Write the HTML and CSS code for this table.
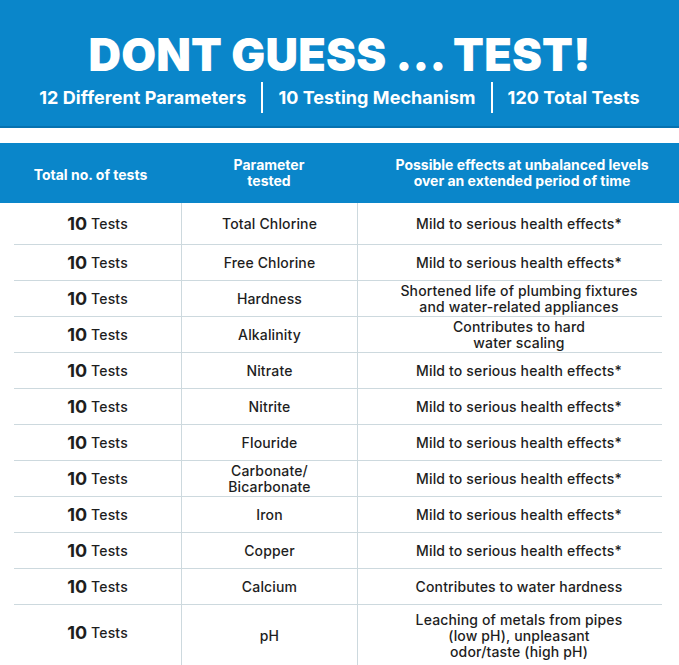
FILE: index.html
```html
<!DOCTYPE html>
<html>
<head>
<meta charset="utf-8">
<link rel="stylesheet" href="styles.css">
</head>
<body>
<div class="page">
  <header class="banner">
    <h1 class="title">DONT GUESS ... TEST!</h1>
    <div class="stats">
      <span class="stat">12 Different Parameters</span>
      <span class="sep"></span>
      <span class="stat">10 Testing Mechanism</span>
      <span class="sep"></span>
      <span class="stat">120 Total Tests</span>
    </div>
  </header>
  <div class="table">
    <div class="thead">
      <div class="th">Total no. of tests</div>
      <div class="th">Parameter<br>tested</div>
      <div class="th th3">Possible effects at unbalanced levels<br>over an extended period of time</div>
    </div>
    <div class="row r1"><div class="c1"><b>10</b> Tests</div><div class="c2">Total Chlorine</div><div class="c3">Mild to serious health effects*</div></div>
    <div class="row"><div class="c1"><b>10</b> Tests</div><div class="c2">Free Chlorine</div><div class="c3">Mild to serious health effects*</div></div>
    <div class="row"><div class="c1"><b>10</b> Tests</div><div class="c2">Hardness</div><div class="c3">Shortened life of plumbing fixtures<br>and water-related appliances</div></div>
    <div class="row"><div class="c1"><b>10</b> Tests</div><div class="c2">Alkalinity</div><div class="c3">Contributes to hard<br>water scaling</div></div>
    <div class="row"><div class="c1"><b>10</b> Tests</div><div class="c2">Nitrate</div><div class="c3">Mild to serious health effects*</div></div>
    <div class="row"><div class="c1"><b>10</b> Tests</div><div class="c2">Nitrite</div><div class="c3">Mild to serious health effects*</div></div>
    <div class="row"><div class="c1"><b>10</b> Tests</div><div class="c2">Flouride</div><div class="c3">Mild to serious health effects*</div></div>
    <div class="row"><div class="c1"><b>10</b> Tests</div><div class="c2">Carbonate/<br>Bicarbonate</div><div class="c3">Mild to serious health effects*</div></div>
    <div class="row"><div class="c1"><b>10</b> Tests</div><div class="c2">Iron</div><div class="c3">Mild to serious health effects*</div></div>
    <div class="row"><div class="c1"><b>10</b> Tests</div><div class="c2">Copper</div><div class="c3">Mild to serious health effects*</div></div>
    <div class="row"><div class="c1"><b>10</b> Tests</div><div class="c2">Calcium</div><div class="c3">Contributes to water hardness</div></div>
    <div class="row last"><div class="c1"><b>10</b> Tests</div><div class="c2">pH</div><div class="c3">Leaching of metals from pipes<br>(low pH), unpleasant<br>odor/taste (high pH)</div></div>
  </div>
</div>
</body>
</html>
```
FILE: styles.css
```css
html, body {
  margin: 0;
  padding: 0;
  background: #ffffff;
}
.page {
  width: 679px;
  font-family: "Inter", "Open Sans", sans-serif;
  color: #1e1e1e;
}
.banner {
  height: 126px;
  background: #0a86ca;
  border-bottom: 2px solid #0672b0;
  display: flex;
  flex-direction: column;
  align-items: center;
  color: #ffffff;
}
.title {
  margin: 29px 0 0;
  font-size: 45px;
  line-height: 52px;
  font-weight: 900;
  letter-spacing: 0.2px;
}
.stats {
  display: flex;
  align-items: center;
  gap: 15px;
  margin-top: 1px;
}
.stat {
  font-size: 18px;
  font-weight: 700;
  letter-spacing: 0.05px;
}
.sep {
  width: 2px;
  height: 31px;
  background: #ffffff;
}
.table {
  margin-top: 15px;
}
.thead {
  height: 60px;
  background: #0a86ca;
  display: grid;
  grid-template-columns: 181px 176px 1fr;
  align-items: center;
  color: #ffffff;
}
.th {
  text-align: center;
  font-size: 14px;
  line-height: 16px;
  font-weight: 700;
}
.th:first-child {
  padding-top: 3px;
}
.th3 {
  padding-left: 8px;
}
.row {
  display: grid;
  grid-template-columns: 181px 176px 1fr;
  height: 36px;
  background: linear-gradient(#cdd9de, #cdd9de) no-repeat 14px 100% / 648px 1px;
  font-size: 14px;
  line-height: 16px;
  font-weight: 500;
  letter-spacing: 0.15px;
}
.row.r1 {
  height: 42px;
}
.row.last {
  height: 61px;
  background: none;
}
.row > div {
  display: flex;
  align-items: center;
  justify-content: center;
  text-align: center;
}
.c1 {
  padding-left: 14px;
  gap: 4px;
}
.row.last .c1 {
  padding-bottom: 6px;
}
.c1 b {
  font-size: 18px;
  font-weight: 700;
  letter-spacing: 0;
}
.c2 {
  border-left: 1px solid #cdd9de;
}
.c3 {
  border-left: 1px solid #cdd9de;
  padding-left: 1px;
}
```
